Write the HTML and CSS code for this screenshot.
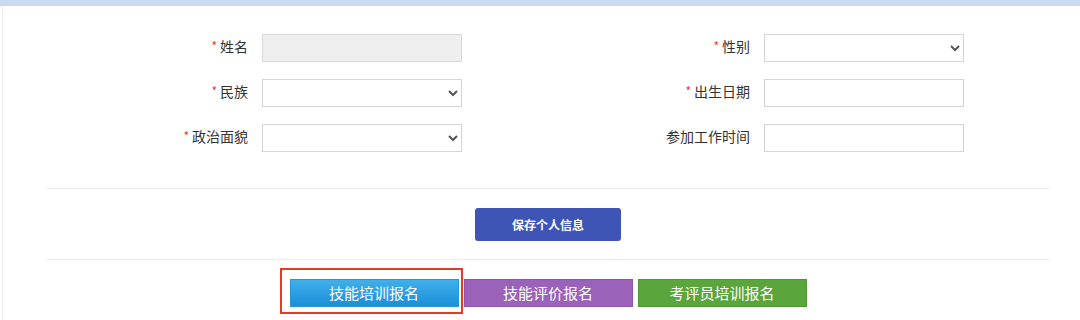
FILE: index.html
```html
<!DOCTYPE html>
<html lang="zh-CN">
<head>
<meta charset="utf-8">
<title>个人信息</title>
<link rel="stylesheet" href="styles.css">
</head>
<body>
<div class="topbar"></div>
<div class="page">
  <div class="form">
    <label class="lbl"><span class="req">*</span>姓名</label>
    <input class="ctl ctl-disabled" type="text" disabled>
    <label class="lbl"><span class="req">*</span>性别</label>
    <select class="ctl"><option></option></select>

    <label class="lbl"><span class="req">*</span>民族</label>
    <select class="ctl"><option></option></select>
    <label class="lbl"><span class="req">*</span>出生日期</label>
    <input class="ctl" type="text">

    <label class="lbl"><span class="req">*</span>政治面貌</label>
    <select class="ctl"><option></option></select>
    <label class="lbl">参加工作时间</label>
    <input class="ctl" type="text">
  </div>

  <div class="divider"></div>
  <div class="save-row">
    <button class="save-btn">保存个人信息</button>
  </div>
  <div class="divider"></div>

  <div class="apply-row">
    <div class="apply-wrap">
      <button class="apply apply-blue">技能培训报名</button>
      <div class="highlight"></div>
    </div>
    <button class="apply apply-purple">技能评价报名</button>
    <button class="apply apply-green">考评员培训报名</button>
  </div>
</div>
</body>
</html>
```

FILE: styles.css
```css
html, body {
  margin: 0;
  padding: 0;
  background: #ffffff;
  font-family: "Noto Sans CJK SC", "Noto Sans", sans-serif;
  color: #333333;
}

.topbar {
  height: 6px;
  background: #c9daf1;
}

.page {
  margin-left: 2px;
  border-left: 1px solid #ececec;
  height: 314px;
  overflow: hidden;
}

.form {
  display: grid;
  grid-template-columns: 245px 200px 274px 200px;
  column-gap: 14px;
  row-gap: 17px;
  padding-top: 28px;
  align-items: center;
}

.lbl {
  text-align: right;
  font-size: 14px;
  line-height: 20px;
  color: #333333;
  margin-top: -4px;
}

.req {
  color: #e4393c;
  font-size: 12px;
  margin-right: 3px;
  vertical-align: 1px;
}

.ctl {
  box-sizing: border-box;
  width: 200px;
  height: 28px;
  margin: 0;
  border: 1px solid #d4d4d4;
  border-radius: 0;
  background: #ffffff;
  font-family: inherit;
  font-size: 13px;
  color: #555555;
  padding: 0 6px;
}

.ctl-disabled {
  background: #efefef;
  border-color: #d8d8d8;
}

.divider {
  margin-left: 43px;
  width: 1004px;
  height: 1px;
  background: #ececec;
}

.form + .divider {
  margin-top: 36px;
}

.save-row {
  display: flex;
  justify-content: center;
  width: 1004px;
  margin-left: 43px;
  padding: 19px 0 18px;
}

.save-btn {
  width: 146px;
  height: 33px;
  border: none;
  border-radius: 3px;
  background: #3e55b6;
  color: #ffffff;
  font-family: inherit;
  font-size: 12px;
  font-weight: bold;
  cursor: pointer;
}

.apply-row {
  display: flex;
  justify-content: center;
  gap: 5px;
  width: 1004px;
  margin-left: 43px;
  padding-top: 19px;
}

.apply-wrap {
  position: relative;
  display: flex;
}

.apply {
  box-sizing: border-box;
  width: 169px;
  height: 28px;
  border: 1px solid transparent;
  color: #ffffff;
  font-family: inherit;
  font-size: 15px;
  line-height: 26px;
  padding: 0;
  cursor: pointer;
}

.apply-blue {
  background: linear-gradient(#40b0ec, #1b8fd8);
  border-color: #2a95d6;
}

.apply-purple {
  background: #9a62b8;
  border-color: #8d55ab;
}

.apply-green {
  background: #5aa63c;
  border-color: #4d9831;
}

.highlight {
  position: absolute;
  left: -10px;
  top: -11px;
  right: -4px;
  bottom: -7px;
  border: 2px solid #e8382a;
  pointer-events: none;
}
```
